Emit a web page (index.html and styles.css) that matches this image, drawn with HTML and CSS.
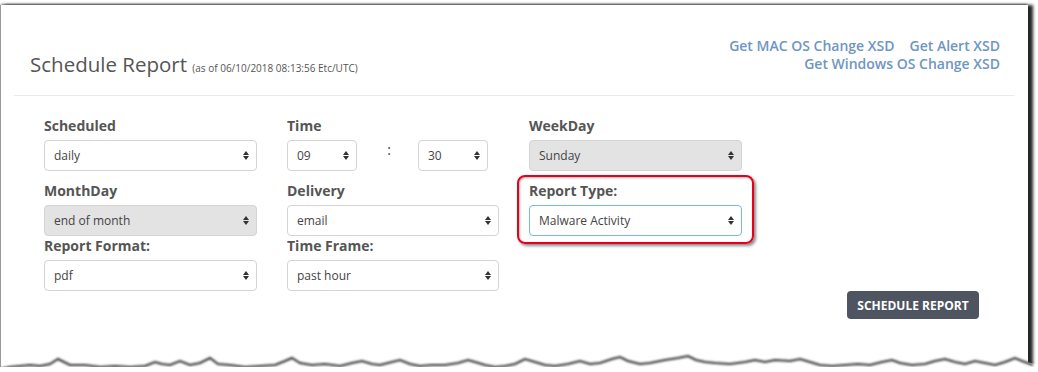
FILE: index.html
```html
<!DOCTYPE html>
<html>
<head lang="en">
    <meta charset="UTF-8">
    <title>Schedule Report</title>
    <link rel="stylesheet" href="styles.css">
</head>
<body>
<div class="sheet">
    <div class="header">
        <h2 class="title">Schedule Report <small>(as of 06/10/2018 08:13:56 Etc/UTC)</small></h2>
        <div class="links">
            <div><a href="#">Get MAC OS Change XSD</a><a href="#">Get Alert XSD</a></div>
            <div><a href="#">Get Windows OS Change XSD</a></div>
        </div>
    </div>
    <form class="form">
        <div class="grid">
            <div class="group top">
                <label>Scheduled</label>
                <div class="select"><select><option>daily</option></select></div>
            </div>
            <div class="group top">
                <label>Time</label>
                <div class="time">
                    <div class="select small"><select><option>09</option></select></div>
                    <span class="colon">:</span>
                    <div class="select small"><select><option>30</option></select></div>
                </div>
            </div>
            <div class="group top">
                <label>WeekDay</label>
                <div class="select"><select disabled><option>Sunday</option></select></div>
            </div>

            <div class="group">
                <label>MonthDay</label>
                <div class="select"><select disabled><option>end of month</option></select></div>
            </div>
            <div class="group">
                <label>Delivery</label>
                <div class="select"><select><option>email</option></select></div>
            </div>
            <div class="group marked">
                <label>Report Type:</label>
                <div class="select"><select class="focus"><option>Malware Activity</option></select></div>
            </div>

            <div class="group">
                <label>Report Format:</label>
                <div class="select"><select><option>pdf</option></select></div>
            </div>
            <div class="group">
                <label>Time Frame:</label>
                <div class="select"><select><option>past hour</option></select></div>
            </div>
        </div>
        <div class="actions">
            <button type="button" class="btn">SCHEDULE REPORT</button>
        </div>
    </form>
    <!-- torn paper edge -->
    <svg class="tear" width="1040" height="30" viewBox="0 0 1040 30">
        <defs>
            <filter id="soft" x="-5%" y="-50%" width="110%" height="200%">
                <feGaussianBlur stdDeviation="1.1"/>
            </filter>
        </defs>
        <polygon fill="#fff" points="0,22 10,20 20,19 30,18 40,19 50,17 58,12 64,15 70,18 85,18 100,20 115,19 130,20 145,19 155,15 162,17 170,18 180,14 190,18 200,16 210,11 218,17 230,18 245,20 260,19 275,18 285,14 292,11 300,16 312,18 325,17 340,19 352,16 362,14 372,17 380,18 392,15 400,13 410,17 420,19 432,18 445,18 458,16 468,13 475,15 485,18 495,20 505,19 515,17 525,12 535,15 545,18 555,19 568,17 580,14 590,17 600,16 612,12 620,10 628,14 640,17 650,16 665,13 678,11 688,9 696,13 705,15 715,16 730,17 745,15 755,13 765,15 775,13 790,14 800,12 810,15 820,18 832,19 845,18 858,17 870,18 882,15 892,13 900,16 912,18 925,17 935,14 945,12 955,15 965,17 975,14 985,16 995,18 1005,15 1015,11 1022,14 1040,18 1040,30 0,30"/>
        <polyline filter="url(#soft)" fill="none" stroke="#333" stroke-width="2" points="0,22 10,20 20,19 30,18 40,19 50,17 58,12 64,15 70,18 85,18 100,20 115,19 130,20 145,19 155,15 162,17 170,18 180,14 190,18 200,16 210,11 218,17 230,18 245,20 260,19 275,18 285,14 292,11 300,16 312,18 325,17 340,19 352,16 362,14 372,17 380,18 392,15 400,13 410,17 420,19 432,18 445,18 458,16 468,13 475,15 485,18 495,20 505,19 515,17 525,12 535,15 545,18 555,19 568,17 580,14 590,17 600,16 612,12 620,10 628,14 640,17 650,16 665,13 678,11 688,9 696,13 705,15 715,16 730,17 745,15 755,13 765,15 775,13 790,14 800,12 810,15 820,18 832,19 845,18 858,17 870,18 882,15 892,13 900,16 912,18 925,17 935,14 945,12 955,15 965,17 975,14 985,16 995,18 1005,15 1015,11 1022,14 1033,18"/>
    </svg>
</div>
</body>
</html>
```

FILE: styles.css
```css
*{
    margin: 0;
    padding: 0;
    box-sizing: border-box;
}
body{
    background: #fff;
    font-family: "Open Sans", "Liberation Sans", sans-serif;
    color: #555;
}
a{
    text-decoration: none;
}
.sheet{
    position: relative;
    width: 1028px;
    height: 362px;
    margin-top: 5px;
    background: #fff;
    border-left: 1px solid #999;
    box-shadow: 5px 0 3px 0 rgba(0,0,0,.85), 0 -2px 2px -1px rgba(0,0,0,.55);
}
.header{
    display: flex;
    justify-content: space-between;
    align-items: flex-start;
    margin: 0 14px 0 13px;
    padding: 32px 14px 15px 16px;
    border-bottom: 1px solid #eaeaea;
}
.title{
    margin-top: 15px;
    font-size: 20.5px;
    font-weight: 400;
    line-height: 24px;
    color: #555;
}
.title small{
    font-size: 10px;
}
.links{
    text-align: right;
    font-size: 14px;
    font-weight: 600;
    line-height: 18px;
}
.links a{
    color: #6e96c2;
    margin-left: 15px;
}
.form{
    padding: 20px 0 0 43px;
}
.grid{
    display: grid;
    grid-template-columns: 213px 212px 213px;
    column-gap: 30px;
}
.group{
    position: relative;
}
.group.top{
    margin-bottom: 10px;
}
.group label{
    display: block;
    font-size: 14px;
    font-weight: 700;
    line-height: 20px;
    margin-bottom: 4px;
    color: #555;
}
.select{
    position: relative;
}
.select select{
    display: block;
    width: 100%;
    height: 31px;
    padding: 0 24px 0 9px;
    font-family: "Open Sans", "Liberation Sans", sans-serif;
    font-size: 12px;
    color: #444;
    background: #fff;
    border: 1px solid #d4d4d4;
    border-radius: 4px;
    -webkit-appearance: none;
    appearance: none;
    outline: none;
}
.select select:disabled{
    background: #e3e3e3;
    color: #444;
    opacity: 1;
}
.select select.focus{
    border-color: #7bb9e4;
}
/* little up/down arrows */
.select:before,
.select:after{
    content: "";
    position: absolute;
    right: 8px;
    width: 0;
    height: 0;
    border-left: 3px solid transparent;
    border-right: 3px solid transparent;
    pointer-events: none;
}
.select:before{
    top: 11px;
    border-bottom: 4px solid #333;
}
.select:after{
    top: 16px;
    border-top: 4px solid #333;
}
.time{
    display: flex;
}
.select.small{
    width: 70px;
}
.colon{
    width: 61px;
    text-align: center;
    font-size: 14px;
    line-height: 20px;
    color: #444;
    padding-left: 3px;
}
/* red highlight round report type */
.group.marked:after{
    content: "";
    position: absolute;
    top: -6px;
    left: -12px;
    right: -12px;
    bottom: -8px;
    border: 2px solid #e5001c;
    border-radius: 8px;
    box-shadow: 2px 2px 3px rgba(0,0,0,.45), inset 1px 1px 2px rgba(0,0,0,.3);
    pointer-events: none;
}
.actions{
    display: flex;
    justify-content: flex-end;
    padding-right: 49px;
}
.btn{
    width: 132px;
    height: 28px;
    background: #4e5560;
    color: #fff;
    border: none;
    border-radius: 4px;
    font-family: "Open Sans", "Liberation Sans", sans-serif;
    font-size: 12px;
    font-weight: 700;
}
.tear{
    position: absolute;
    left: -1px;
    bottom: -10px;
}
```
